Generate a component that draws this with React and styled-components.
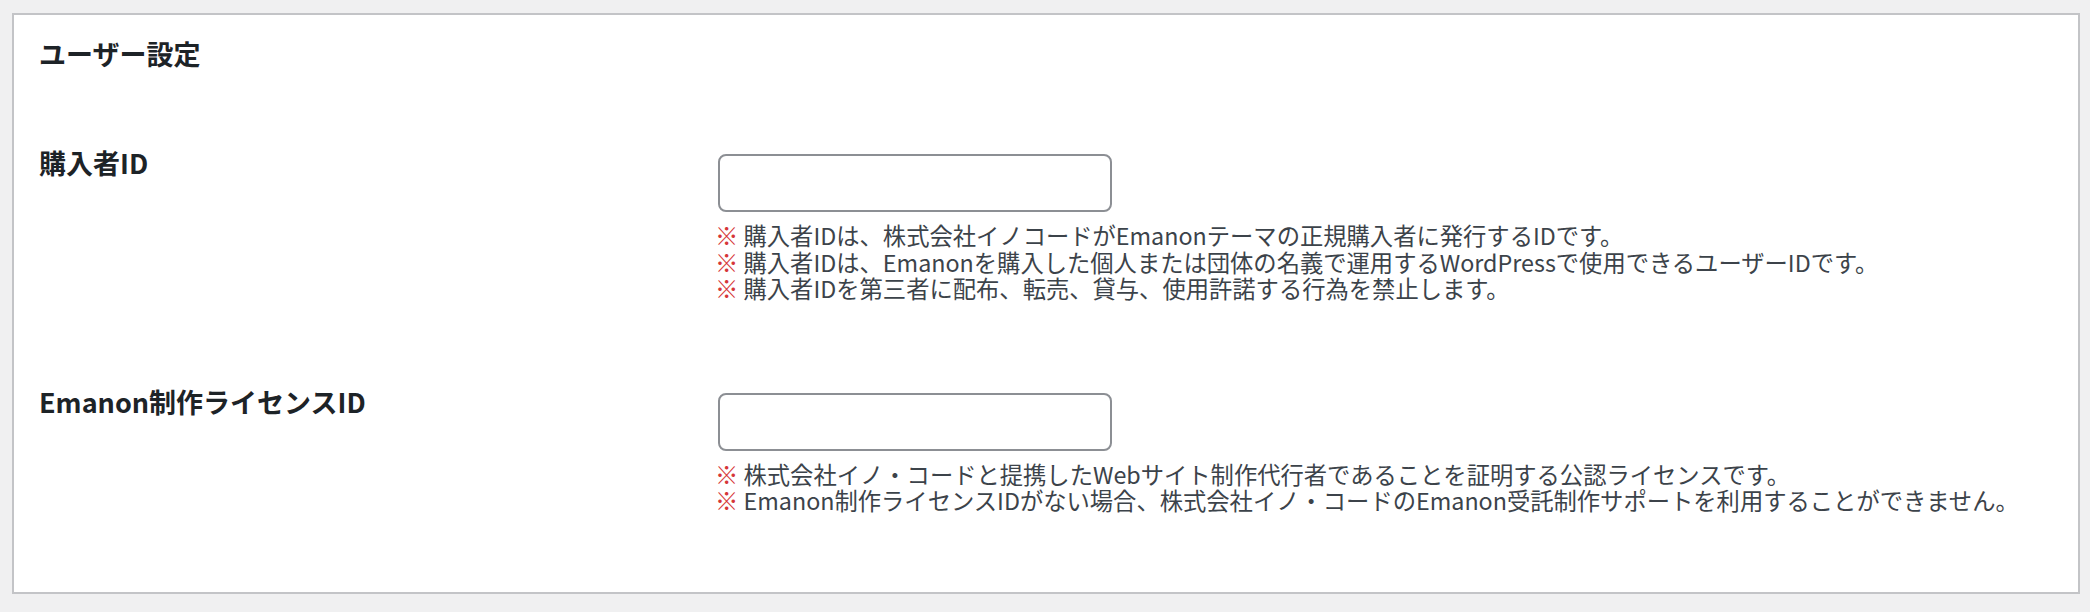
import React from "react";
import styled, { createGlobalStyle } from "styled-components";

const GlobalStyle = createGlobalStyle`
  html, body {
    margin: 0;
    padding: 0;
    background: #f0f0f1;
  }
  body {
    font-family: "Noto Sans CJK JP", "Noto Sans", sans-serif;
    color: #1d2327;
  }
`;

const fields = [
  {
    label: "購入者ID",
    notes: [
      "購入者IDは、株式会社イノコードがEmanonテーマの正規購入者に発行するIDです。",
      "購入者IDは、Emanonを購入した個人または団体の名義で運用するWordPressで使用できるユーザーIDです。",
      "購入者IDを第三者に配布、転売、貸与、使用許諾する行為を禁止します。",
    ],
  },
  {
    label: "Emanon制作ライセンスID",
    notes: [
      "株式会社イノ・コードと提携したWebサイト制作代行者であることを証明する公認ライセンスです。",
      "Emanon制作ライセンスIDがない場合、株式会社イノ・コードのEmanon受託制作サポートを利用することができません。",
    ],
  },
];

const App = () => {
  return (
    <Page>
      <GlobalStyle />
      <Panel>
        <Title>ユーザー設定</Title>
        <Rows>
          {fields.map((f) => (
            <Row key={f.label}>
              <Label>{f.label}</Label>
              <Field>
                <Input type="text" />
                <Notes>
                  {f.notes.map((n) => (
                    <Note key={n}>
                      <Mark>※</Mark> {n}
                    </Note>
                  ))}
                </Notes>
              </Field>
            </Row>
          ))}
        </Rows>
      </Panel>
    </Page>
  );
};

const Page = styled.div`
  padding: 13px 10px 11px 12px;
`;

const Panel = styled.section`
  background: #fff;
  border: 2px solid #c3c4c7;
  padding: 21px 25px 78px 25px;
`;

const Title = styled.h2`
  margin: 0 0 74px 0;
  font-size: 27px;
  line-height: 35px;
  font-weight: 700;
  color: #1d2327;
`;

const Rows = styled.div`
  display: flex;
  flex-direction: column;
  gap: 82px;
`;

const Row = styled.div`
  display: grid;
  grid-template-columns: 679px 1fr;
`;

const Label = styled.div`
  font-size: 27px;
  line-height: 35px;
  font-weight: 700;
  color: #1d2327;
`;

const Field = styled.div`
  display: flex;
  flex-direction: column;
  padding-top: 9px;
`;

const Input = styled.input`
  box-sizing: border-box;
  width: 394px;
  height: 58px;
  border: 2px solid #8c8f94;
  border-radius: 8px;
  background: #fff;
  margin: 0;
  outline: none;
`;

const Notes = styled.div`
  margin-top: 10px;
`;

const Note = styled.p`
  margin: 0;
  font-size: 23.3px;
  line-height: 26.5px;
  color: #3c434a;
  white-space: nowrap;
`;

const Mark = styled.span`
  color: #d63638;
  font-weight: 700;
  margin-left: -3px;
`;

export default App;
